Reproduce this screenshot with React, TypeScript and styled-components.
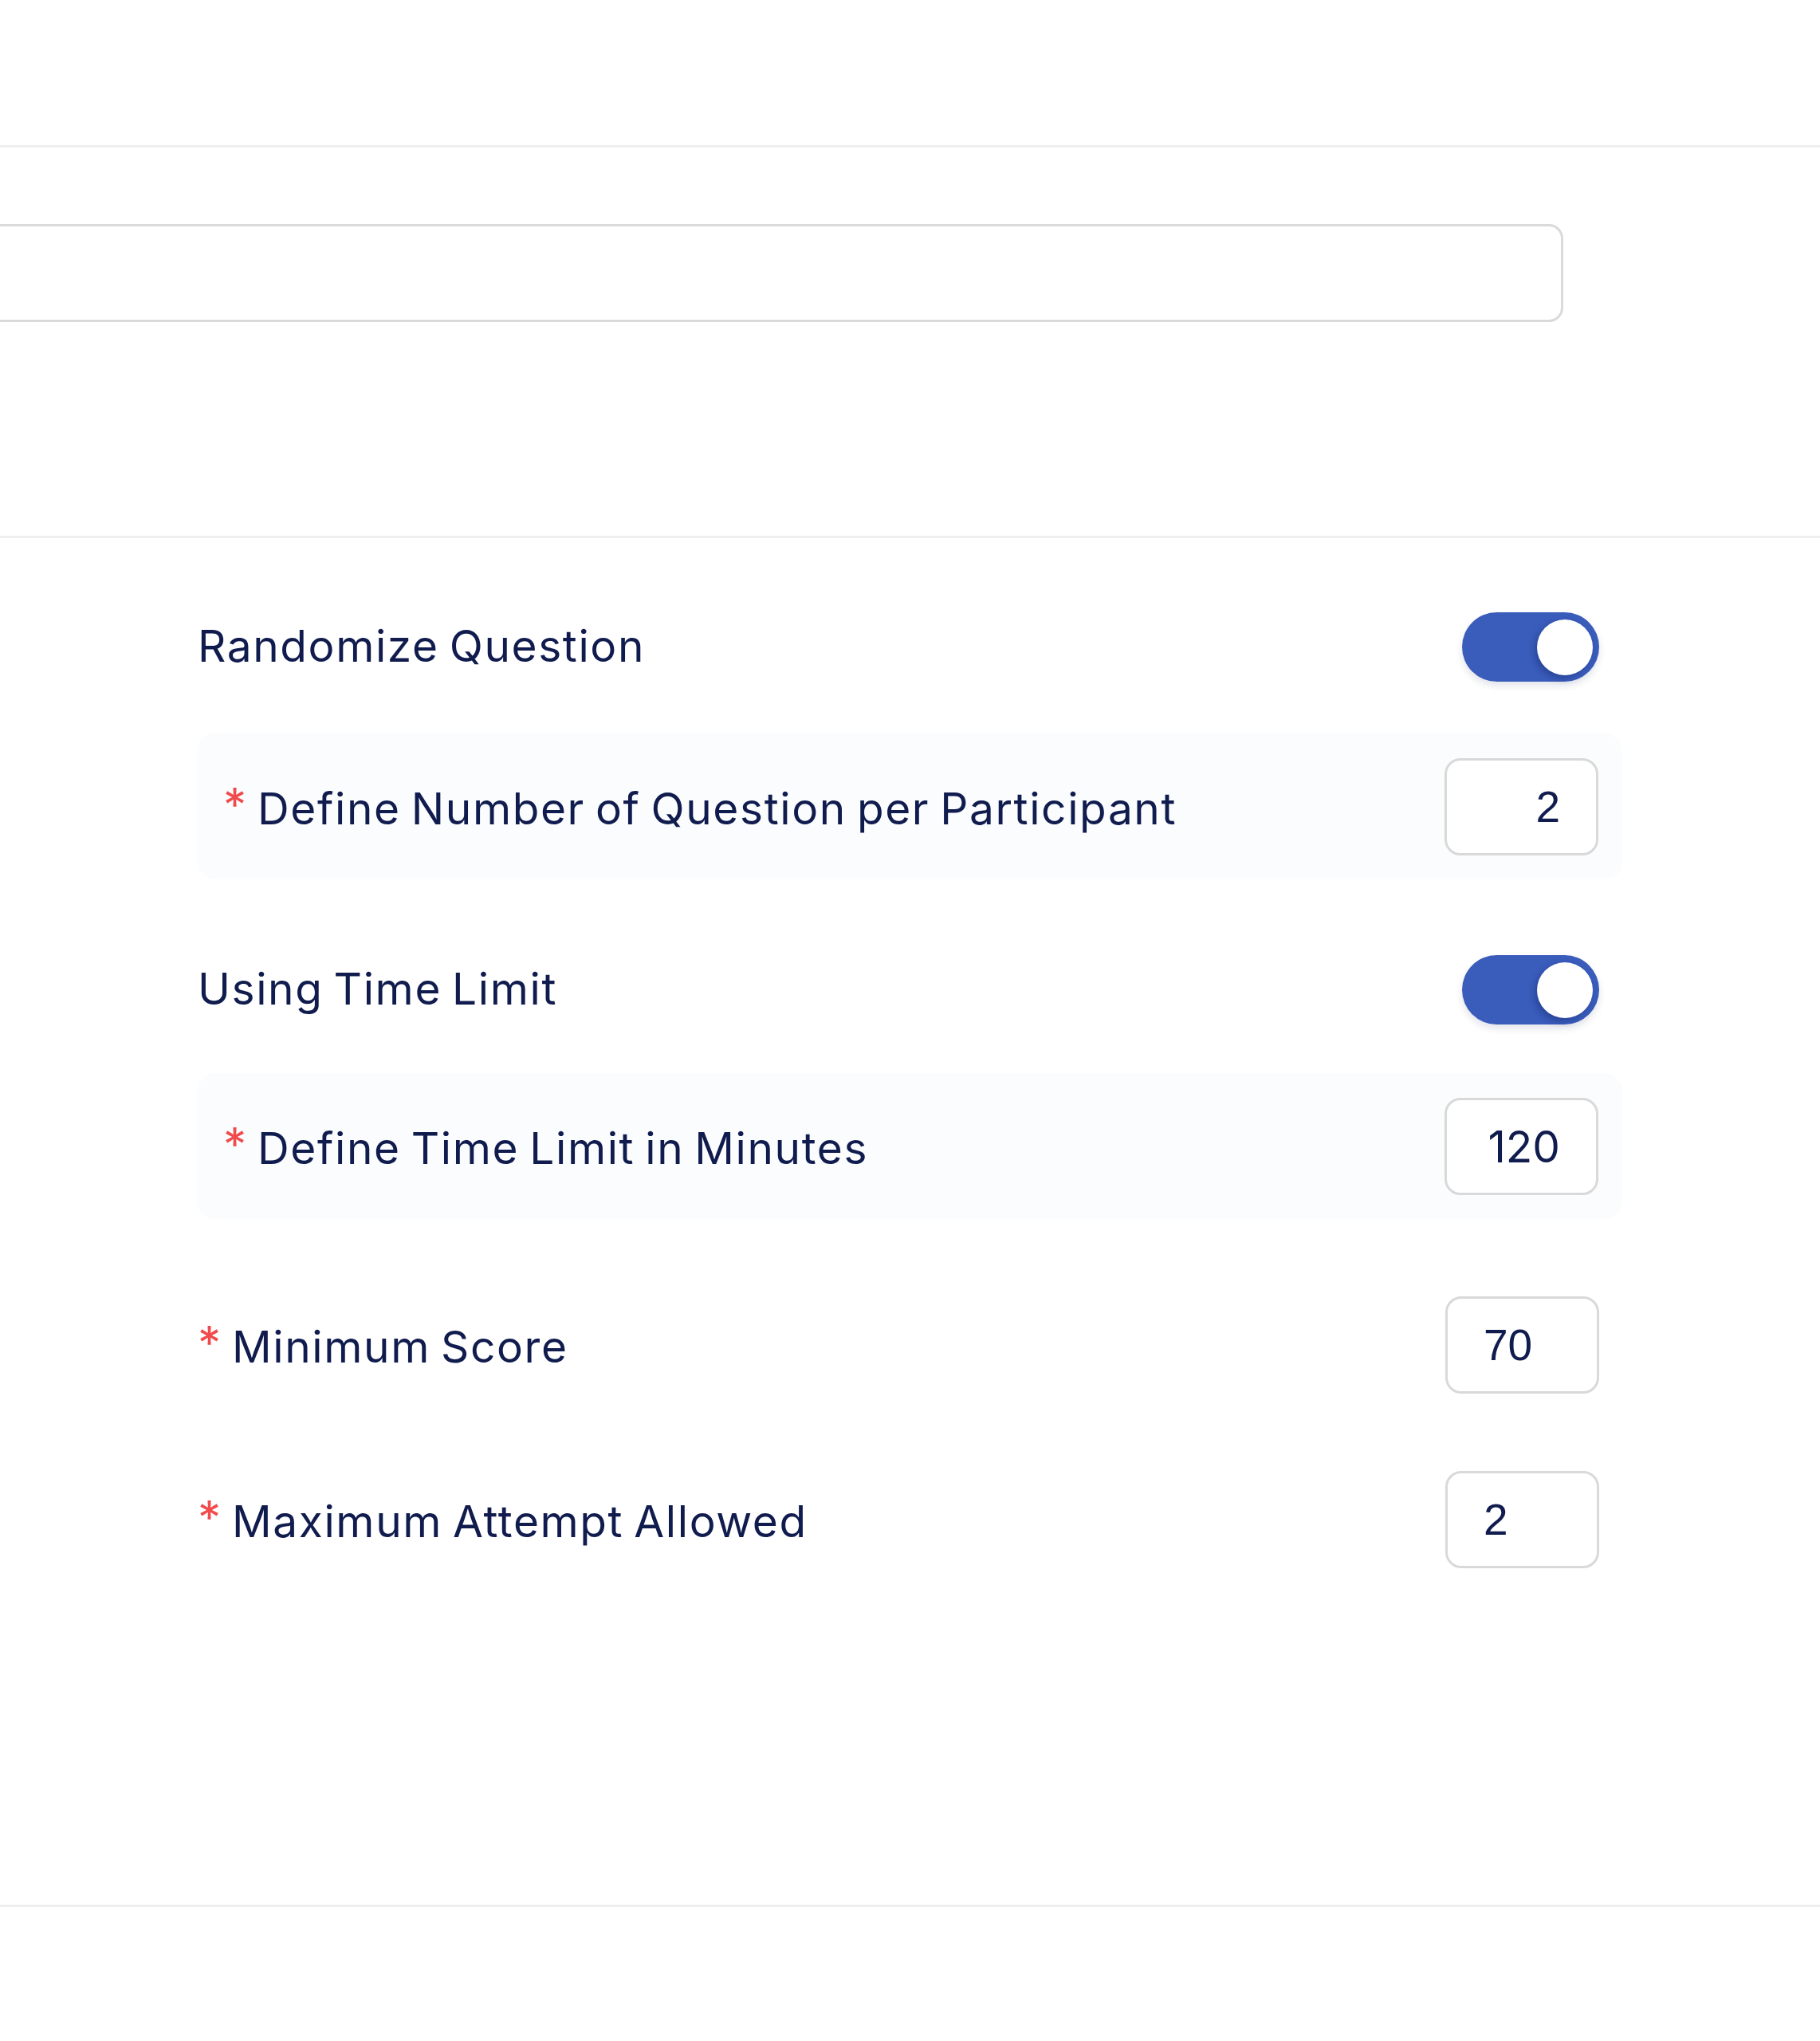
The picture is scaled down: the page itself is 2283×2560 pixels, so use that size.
import React from "react"
import styled, { createGlobalStyle, css } from "styled-components"

// STYLES
const GlobalStyle = createGlobalStyle`
  html, body {
    margin: 0;
    padding: 0;
    background: #ffffff;
  }
  body {
    font-family: Inter, "Noto Sans", sans-serif;
    color: #111c4e;
    overflow-x: hidden;
  }
`

const Page = styled.div`
  width: 2283px;
  min-height: 2560px;
  background: #ffffff;
  overflow: hidden;
`

const Header = styled.div`
  height: 182px;
  border-bottom: 3px solid #efefef;
`

const FieldSection = styled.section`
  height: 490px;
  padding-top: 96px;
  box-sizing: border-box;
  border-bottom: 3px solid #efefef;
`

const TextField = styled.div`
  margin-left: -40px;
  width: 2001px;
  height: 123px;
  box-sizing: border-box;
  border: 3px solid #dadada;
  border-radius: 18px;
  background: #ffffff;
`

const Settings = styled.section`
  display: flex;
  flex-direction: column;
  margin-left: 248px;
  width: 1758px;
  padding-top: 93px;
  padding-bottom: 422px;
`

const Row = styled.div<{ $top?: number }>`
  display: flex;
  align-items: center;
  justify-content: space-between;
  margin-top: ${(p) => p.$top ?? 0}px;
`

const Panel = styled(Row)`
  height: 183px;
  margin-right: -29px;
  padding: 0 30px 0 32px;
  border-radius: 22px;
  background: #fafcfe;
`

const Label = styled.span`
  font-size: 55px;
  line-height: 1;
  font-weight: 400;
  color: #111c4e;
  letter-spacing: 1.6px;
  word-spacing: -4px;
  white-space: nowrap;
  margin-top: -2px;
`

const Required = styled.span`
  display: inline-block;
  margin-right: 14px;
  font-size: 58px;
  letter-spacing: 0;
  color: #f04a4c;
  vertical-align: 4px;
`

const Switch = styled.div`
  flex: none;
  display: flex;
  align-items: center;
  justify-content: flex-end;
  width: 172px;
  height: 87px;
  padding: 0 8px;
  box-sizing: border-box;
  border-radius: 44px;
  background: #3a5cbb;
  box-shadow: 0 5px 10px rgba(20, 30, 80, 0.12);
`

const Knob = styled.span`
  width: 70px;
  height: 70px;
  border-radius: 50%;
  background: #ffffff;
  box-shadow: -3px 4px 8px rgba(10, 25, 90, 0.35);
`

const NumberBox = styled.div<{ $align: "left" | "right"; $geometric?: boolean }>`
  flex: none;
  display: flex;
  align-items: center;
  justify-content: ${(p) => (p.$align === "right" ? "flex-end" : "flex-start")};
  width: 193px;
  height: 122px;
  padding: 0 45px;
  box-sizing: border-box;
  border: 3px solid #d9d9d9;
  border-radius: 20px;
  background: #ffffff;
  font-family: "Liberation Sans", Arial, sans-serif;
  font-size: 55px;
  color: #111c4e;
  ${(p) =>
    p.$geometric &&
    css`
      font-family: Inter, "Noto Sans", sans-serif;
    `}
`

const Footer = styled.div`
  border-top: 3px solid #efefef;
  height: 165px;
`

// TYPES
interface FieldLabelProps {
  text: string
  required?: boolean
}

const FieldLabel = ({ text, required }: FieldLabelProps) => (
  <Label>
    {required && <Required>*</Required>}
    {text}
  </Label>
)

const Toggle = () => (
  <Switch role="switch" aria-checked="true">
    <Knob />
  </Switch>
)

const App = () => {
  return (
    <Page>
      <GlobalStyle />
      <Header />
      <FieldSection>
        <TextField />
      </FieldSection>
      <Settings>
        <Row>
          <FieldLabel text="Randomize Question" />
          <Toggle />
        </Row>
        <Panel $top={65}>
          <FieldLabel required text="Define Number of Question per Participant" />
          <NumberBox $align="right">2</NumberBox>
        </Panel>
        <Row $top={95}>
          <FieldLabel text="Using Time Limit" />
          <Toggle />
        </Row>
        <Panel $top={61}>
          <FieldLabel required text="Define Time Limit in Minutes" />
          <NumberBox $align="right" $geometric>
            120
          </NumberBox>
        </Panel>
        <Row $top={97}>
          <FieldLabel required text="Minimum Score" />
          <NumberBox $align="left">70</NumberBox>
        </Row>
        <Row $top={97}>
          <FieldLabel required text="Maximum Attempt Allowed" />
          <NumberBox $align="left">2</NumberBox>
        </Row>
      </Settings>
      <Footer />
    </Page>
  )
}

export default App
